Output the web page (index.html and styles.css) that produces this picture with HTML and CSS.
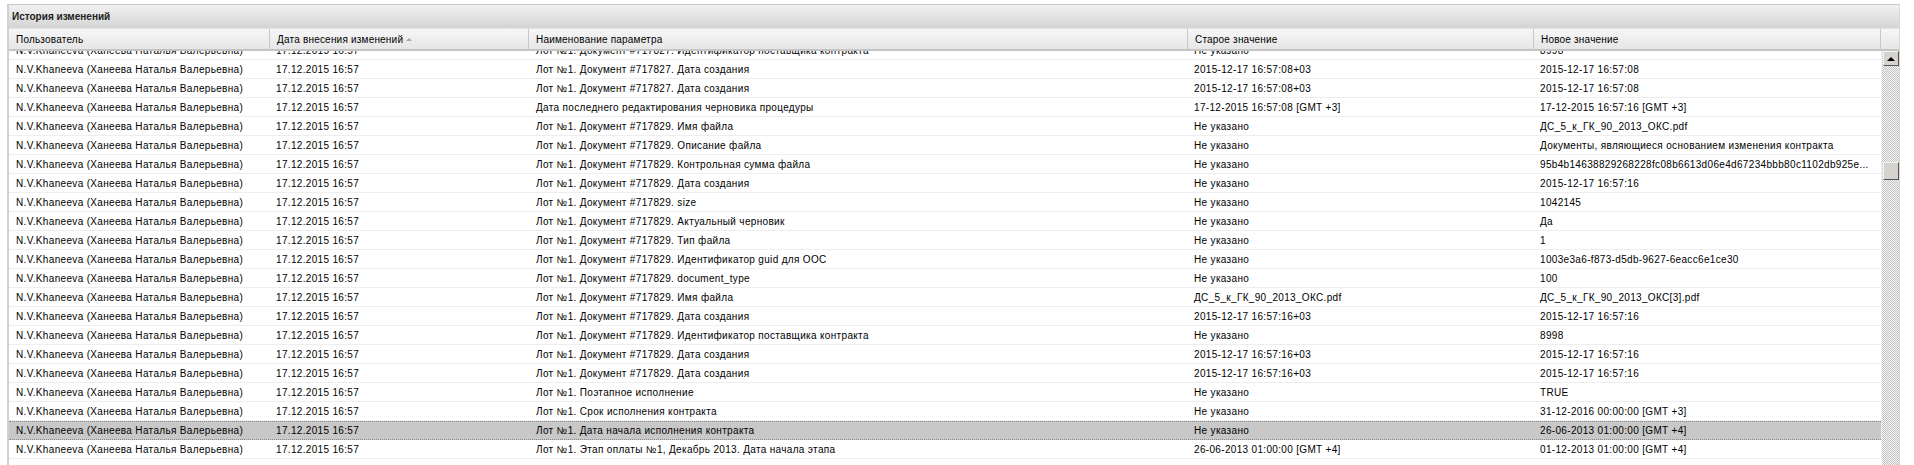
FILE: index.html
```html
<!DOCTYPE html>
<html lang="ru">
<head>
<meta charset="utf-8">
<title>История изменений</title>
<link rel="stylesheet" href="styles.css">
</head>
<body>
<section class="panel">
  <h1 class="panel-title">История изменений</h1>
  <div class="head">
    <div class="hcell">Пользователь</div>
    <div class="hcell">Дата внесения изменений <span class="sort"></span></div>
    <div class="hcell">Наименование параметра</div>
    <div class="hcell">Старое значение</div>
    <div class="hcell">Новое значение</div>
    <div class="hcell"></div>
  </div>
  <div class="body">
    <div class="viewport">
      <div class="rows">
        <div class="row"><span>N.V.Khaneeva (Ханеева Наталья Валерьевна)</span><span>17.12.2015 16:57</span><span>Лот №1. Документ #717827. Идентификатор поставщика контракта</span><span>Не указано</span><span>8998</span></div>
        <div class="row"><span>N.V.Khaneeva (Ханеева Наталья Валерьевна)</span><span>17.12.2015 16:57</span><span>Лот №1. Документ #717827. Дата создания</span><span>2015-12-17 16:57:08+03</span><span>2015-12-17 16:57:08</span></div>
        <div class="row"><span>N.V.Khaneeva (Ханеева Наталья Валерьевна)</span><span>17.12.2015 16:57</span><span>Лот №1. Документ #717827. Дата создания</span><span>2015-12-17 16:57:08+03</span><span>2015-12-17 16:57:08</span></div>
        <div class="row"><span>N.V.Khaneeva (Ханеева Наталья Валерьевна)</span><span>17.12.2015 16:57</span><span>Дата последнего редактирования черновика процедуры</span><span>17-12-2015 16:57:08 [GMT +3]</span><span>17-12-2015 16:57:16 [GMT +3]</span></div>
        <div class="row"><span>N.V.Khaneeva (Ханеева Наталья Валерьевна)</span><span>17.12.2015 16:57</span><span>Лот №1. Документ #717829. Имя файла</span><span>Не указано</span><span>ДС_5_к_ГК_90_2013_ОКС.pdf</span></div>
        <div class="row"><span>N.V.Khaneeva (Ханеева Наталья Валерьевна)</span><span>17.12.2015 16:57</span><span>Лот №1. Документ #717829. Описание файла</span><span>Не указано</span><span>Документы, являющиеся основанием изменения контракта</span></div>
        <div class="row"><span>N.V.Khaneeva (Ханеева Наталья Валерьевна)</span><span>17.12.2015 16:57</span><span>Лот №1. Документ #717829. Контрольная сумма файла</span><span>Не указано</span><span>95b4b14638829268228fc08b6613d06e4d67234bbb80c1102db925e...</span></div>
        <div class="row"><span>N.V.Khaneeva (Ханеева Наталья Валерьевна)</span><span>17.12.2015 16:57</span><span>Лот №1. Документ #717829. Дата создания</span><span>Не указано</span><span>2015-12-17 16:57:16</span></div>
        <div class="row"><span>N.V.Khaneeva (Ханеева Наталья Валерьевна)</span><span>17.12.2015 16:57</span><span>Лот №1. Документ #717829. size</span><span>Не указано</span><span>1042145</span></div>
        <div class="row"><span>N.V.Khaneeva (Ханеева Наталья Валерьевна)</span><span>17.12.2015 16:57</span><span>Лот №1. Документ #717829. Актуальный черновик</span><span>Не указано</span><span>Да</span></div>
        <div class="row"><span>N.V.Khaneeva (Ханеева Наталья Валерьевна)</span><span>17.12.2015 16:57</span><span>Лот №1. Документ #717829. Тип файла</span><span>Не указано</span><span>1</span></div>
        <div class="row"><span>N.V.Khaneeva (Ханеева Наталья Валерьевна)</span><span>17.12.2015 16:57</span><span>Лот №1. Документ #717829. Идентификатор guid для ООС</span><span>Не указано</span><span>1003e3a6-f873-d5db-9627-6eacc6e1ce30</span></div>
        <div class="row"><span>N.V.Khaneeva (Ханеева Наталья Валерьевна)</span><span>17.12.2015 16:57</span><span>Лот №1. Документ #717829. document_type</span><span>Не указано</span><span>100</span></div>
        <div class="row"><span>N.V.Khaneeva (Ханеева Наталья Валерьевна)</span><span>17.12.2015 16:57</span><span>Лот №1. Документ #717829. Имя файла</span><span>ДС_5_к_ГК_90_2013_ОКС.pdf</span><span>ДС_5_к_ГК_90_2013_ОКС[3].pdf</span></div>
        <div class="row"><span>N.V.Khaneeva (Ханеева Наталья Валерьевна)</span><span>17.12.2015 16:57</span><span>Лот №1. Документ #717829. Дата создания</span><span>2015-12-17 16:57:16+03</span><span>2015-12-17 16:57:16</span></div>
        <div class="row"><span>N.V.Khaneeva (Ханеева Наталья Валерьевна)</span><span>17.12.2015 16:57</span><span>Лот №1. Документ #717829. Идентификатор поставщика контракта</span><span>Не указано</span><span>8998</span></div>
        <div class="row"><span>N.V.Khaneeva (Ханеева Наталья Валерьевна)</span><span>17.12.2015 16:57</span><span>Лот №1. Документ #717829. Дата создания</span><span>2015-12-17 16:57:16+03</span><span>2015-12-17 16:57:16</span></div>
        <div class="row"><span>N.V.Khaneeva (Ханеева Наталья Валерьевна)</span><span>17.12.2015 16:57</span><span>Лот №1. Документ #717829. Дата создания</span><span>2015-12-17 16:57:16+03</span><span>2015-12-17 16:57:16</span></div>
        <div class="row"><span>N.V.Khaneeva (Ханеева Наталья Валерьевна)</span><span>17.12.2015 16:57</span><span>Лот №1. Поэтапное исполнение</span><span>Не указано</span><span>TRUE</span></div>
        <div class="row"><span>N.V.Khaneeva (Ханеева Наталья Валерьевна)</span><span>17.12.2015 16:57</span><span>Лот №1. Срок исполнения контракта</span><span>Не указано</span><span>31-12-2016 00:00:00 [GMT +3]</span></div>
        <div class="row selected"><span>N.V.Khaneeva (Ханеева Наталья Валерьевна)</span><span>17.12.2015 16:57</span><span>Лот №1. Дата начала исполнения контракта</span><span>Не указано</span><span>26-06-2013 01:00:00 [GMT +4]</span></div>
        <div class="row"><span>N.V.Khaneeva (Ханеева Наталья Валерьевна)</span><span>17.12.2015 16:57</span><span>Лот №1. Этап оплаты №1, Декабрь 2013. Дата начала этапа</span><span>26-06-2013 01:00:00 [GMT +4]</span><span>01-12-2013 01:00:00 [GMT +4]</span></div>
      </div>
    </div>
    <div class="scrollbar">
      <div class="sb-button"><span class="sb-arrow"></span></div>
      <div class="sb-thumb"></div>
    </div>
  </div>
</section>
</body>
</html>
```
FILE: styles.css
```css
* { box-sizing: border-box; }
html, body { margin: 0; height: 465px; overflow: hidden; background: #fff; }
body {
  padding: 4px 14px 0 7px;
  font-family: "Liberation Sans", Arial, sans-serif;
  font-size: 10px;
  color: #000;
}
.panel {
  height: 461px;
  display: flex;
  flex-direction: column;
  border-top: 1px solid #c8c8c8;
  border-left: 2px solid #d0d0d0;
  border-right: 1px solid #d8d8d8;
  background: #e2e2e2;
}
.panel-title {
  margin: 0;
  height: 23px;
  padding: 0 0 0 3px;
  display: flex;
  align-items: center;
  font-size: 10px;
  font-weight: bold;
  color: #222;
  background: linear-gradient(#f1f1f1, #d4d4d4);
}
.head {
  height: 22px;
  margin-top: 1px;
  display: grid;
  grid-template-columns: 261px 259px 659px 346px 347px 1fr;
  border-bottom: 2px solid #c4c4c4;
  background: linear-gradient(#f7f7f7, #e6e6e6);
}
.hcell {
  padding: 0 0 0 7px;
  display: flex;
  align-items: center;
  gap: 3px;
  letter-spacing: 0.2px;
  border-right: 1px solid #c8c8c8;
  white-space: nowrap;
}
.hcell:last-child { border-right: 0; }
.sort {
  width: 0;
  height: 0;
  border-left: 3px solid transparent;
  border-right: 3px solid transparent;
  border-bottom: 3px solid #aaa;
}
.body {
  flex: 1;
  min-height: 0;
  display: flex;
  background: #fff;
}
.viewport { flex: 1; min-width: 0; overflow: hidden; }
.rows { margin-top: -10px; border-right: 1px solid #eee; }
.row {
  height: 19px;
  display: grid;
  grid-template-columns: 260px 260px 658px 346px 1fr;
  align-items: center;
  border-bottom: 1px solid #eee;
  white-space: nowrap;
  letter-spacing: 0.33px;
  background: #fff;
}
.row span { padding-left: 7px; overflow: hidden; }
.row.selected {
  background: #c8c8c8;
  border-top: 1px dotted #888;
  border-bottom: 1px dotted #888;
}
.scrollbar {
  width: 17px;
  display: flex;
  flex-direction: column;
  padding: 0 0 0 1px;
  background-color: #e6e6e6;
  background-image: conic-gradient(#c4c4c4 25%, #f4f4f4 0 50%, #c4c4c4 0 75%, #f4f4f4 0);
  background-size: 2px 2px;
}
.sb-button, .sb-thumb {
  width: 16px;
  background: #d6d3ce;
  border: 1px solid;
  border-color: #f4f4f4 #555 #555 #f4f4f4;
}
.sb-button {
  height: 15px;
  display: flex;
  align-items: center;
  justify-content: center;
}
.sb-arrow {
  width: 0;
  height: 0;
  border-left: 4px solid transparent;
  border-right: 4px solid transparent;
  border-bottom: 4px solid #000;
}
.sb-thumb { height: 18px; margin-top: 96px; }
```
